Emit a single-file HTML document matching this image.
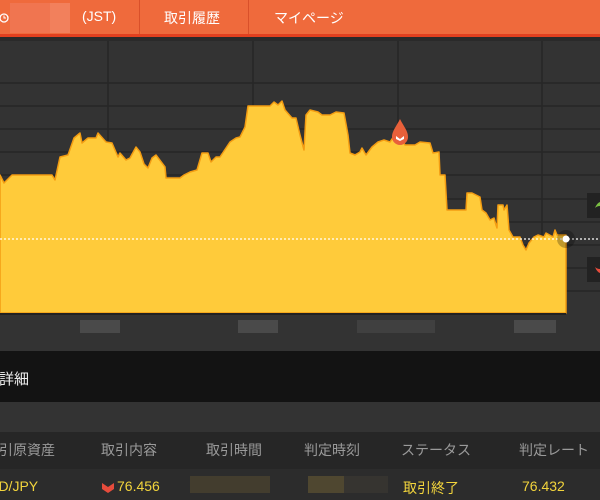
<!DOCTYPE html>
<html><head><meta charset="utf-8"><style>
body{margin:0;width:600px;height:500px;overflow:hidden;background:#333;font-family:"Liberation Sans","Noto Sans CJK JP",sans-serif;position:relative}
.a{position:absolute}
.hd{left:0;top:0;width:600px;height:34px;background:#ef6a3c;border-bottom:3px solid #e2401f}
.t{color:#fff;font-size:14px;top:8px}
.g{background:#4a4a4a}
.th{color:#9a9a9a;font-size:14px;top:440px}
.y{color:#f2d43c;font-size:14px;top:478px}
</style></head><body>
<div class="a hd"></div>
<div class="a" style="left:10px;top:3px;width:60px;height:30px;background:#f07550"></div>
<div class="a" style="left:50px;top:3px;width:20px;height:30px;background:#f2805c"></div>
<svg class="a" style="left:0;top:12px" width="10" height="12"><circle cx="4" cy="6" r="4" fill="none" stroke="#fff" stroke-width="1.3"/><path d="M4 3.5V6h2" stroke="#fff" fill="none" stroke-width="1"/></svg>
<div class="a t" style="left:82px">(JST)</div>
<div class="a" style="left:139px;top:0;width:1px;height:34px;background:#d9502a"></div>
<div class="a" style="left:248px;top:0;width:1px;height:34px;background:#d9502a"></div>
<div class="a t" style="left:164px">取引履歴</div>
<div class="a t" style="left:274px">マイページ</div>
<div class="a" style="left:0;top:37px;width:600px;height:4px;background:#2a2a2a"></div>
<svg class="a" style="left:0;top:41px" width="600" height="273">
<g stroke="#262626" stroke-width="1.5">
<line x1="108" y1="0" x2="108" y2="273"/><line x1="253" y1="0" x2="253" y2="273"/><line x1="398" y1="0" x2="398" y2="273"/><line x1="542" y1="0" x2="542" y2="273"/>
<line x1="0" y1="42" x2="600" y2="42"/><line x1="0" y1="65" x2="600" y2="65"/><line x1="0" y1="88" x2="600" y2="88"/><line x1="0" y1="111" x2="600" y2="111"/><line x1="0" y1="134" x2="600" y2="134"/><line x1="0" y1="158" x2="600" y2="158"/><line x1="0" y1="181" x2="600" y2="181"/><line x1="0" y1="204" x2="600" y2="204"/><line x1="0" y1="227" x2="600" y2="227"/><line x1="0" y1="250" x2="600" y2="250"/>
</g>
<g transform="translate(0,-41)">
<polygon fill="#ffcb3a" stroke="#f39c12" stroke-width="1.5" stroke-linejoin="round" points="0,313 0,175 4,183 12,175 52,175 55,180 60,157 68,155 74,138 80,133 82,143 88,138 96,138 98,133 106,142 112,143 118,157 120,153 126,160 130,158 136,147 140,152 144,164 148,168 152,158 156,155 165,167 166,178 180,178 184,175 190,172 197,170 202,153 208,153 211,162 216,157 220,157 230,142 236,138 240,137 245,127 248,106 270,106 274,102 278,105 282,101 285,110 292,118 296,118 300,135 304,150 306,115 310,110 318,112 322,115 330,115 336,112 344,113 348,135 350,153 355,155 360,152 362,148 366,155 372,147 378,142 384,140 390,142 394,136 400,136 405,145 415,145 420,142 430,143 433,153 439,152 440,175 445,175 447,210 466,210 467,193 472,193 480,197 482,210 486,213 490,220 494,218 496,225 497,228 498,205 503,205 504,210 507,205 509,230 513,237 520,237 523,245 526,250 529,243 534,237 538,235 544,237 546,233 553,237 555,230 557,235 566,235 566,313"/>
<line x1="0" y1="239" x2="600" y2="239" stroke="#fff" stroke-width="1.2" stroke-dasharray="2,2"/>
<circle cx="566" cy="239" r="9" fill="#000" opacity=".25"/>
<circle cx="566" cy="239" r="3.5" fill="#fff"/>
<path d="M400 119 C396 127 392 131 392 137 a8 8 0 0 0 16 0 C408 131 404 127 400 119Z" fill="#e8603a"/>
<path d="M396 136 l4 3 4-3 v3 l-4 2 -4-2z" fill="#fff"/>
<rect x="587" y="193" width="13" height="25" fill="#222"/>
<path d="M595 208 q2-5 5-6 v4 q-3 0-5 2z" fill="#7bc043"/>
<rect x="587" y="257" width="13" height="25" fill="#222"/>
<path d="M595 267 q2 5 5 6 v-4 q-3 0-5-2z" fill="#e74c3c"/>
</g></svg>
<div class="a" style="left:0;top:313px;width:566px;height:2px;background:#222"></div>
<div class="a g" style="left:80px;top:320px;width:40px;height:13px"></div>
<div class="a g" style="left:238px;top:320px;width:40px;height:13px"></div>
<div class="a" style="left:357px;top:320px;width:78px;height:13px;background:#404040"></div>
<div class="a g" style="left:514px;top:320px;width:42px;height:13px"></div>
<div class="a" style="left:0;top:351px;width:600px;height:51px;background:#131313"></div>
<div class="a" style="left:-6px;top:368px;color:#eee;font-size:15px">‹詳細</div>
<div class="a" style="left:0;top:402px;width:600px;height:30px;background:#333"></div>
<div class="a" style="left:0;top:432px;width:600px;height:37px;background:#262626"></div>
<div class="a" style="left:0;top:469px;width:600px;height:31px;background:#2c2c2c"></div>
<div class="a th" style="left:-15px">取引原資産</div>
<div class="a th" style="left:101px">取引内容</div>
<div class="a th" style="left:206px">取引時間</div>
<div class="a th" style="left:304px">判定時刻</div>
<div class="a th" style="left:401px">ステータス</div>
<div class="a th" style="left:519px">判定レート</div>
<div class="a y" style="left:-21px">USD/JPY</div>
<svg class="a" style="left:102px;top:483px" width="12" height="10"><path d="M0 0 l6 4 6-4 v6 l-6 4 -6-4z" fill="#e74c3c"/></svg>
<div class="a y" style="left:117px">76.456</div>
<div class="a" style="left:190px;top:476px;width:80px;height:17px;background:#433d2e"></div>
<div class="a" style="left:308px;top:476px;width:36px;height:17px;background:#4f4730"></div>
<div class="a" style="left:344px;top:476px;width:44px;height:17px;background:#363430"></div>
<div class="a y" style="left:403px">取引終了</div>
<div class="a y" style="left:522px">76.432</div>
</body></html>
